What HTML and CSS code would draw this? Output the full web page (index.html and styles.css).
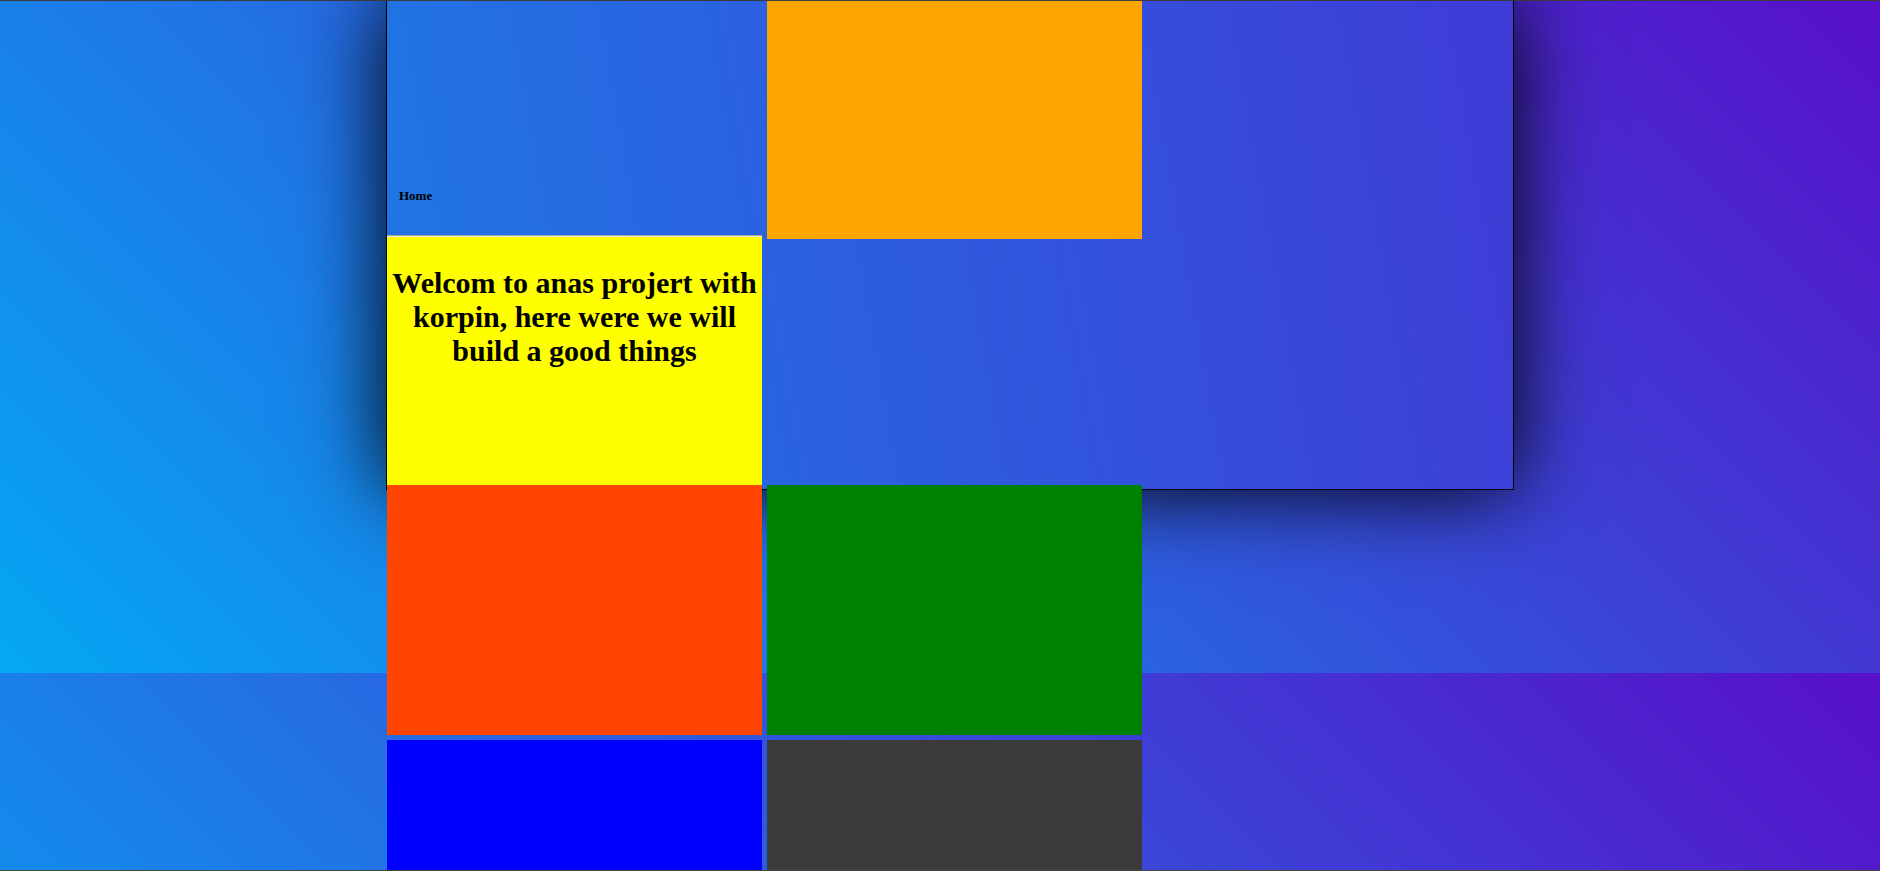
FILE: index.html
```html
<!DOCTYPE html>
<html lang="en">
<head>
<meta charset="utf-8">
<title>anas projert</title>
<link rel="stylesheet" href="styles.css">
</head>
<body>
<div class="stage">
  <header class="frame"></header>
  <main class="tiles">
    <div class="col">
      <nav class="nav"><a class="nav-link" href="#">Home</a></nav>
      <section class="tile tile-yellow">
        <h1 class="welcome">Welcom to anas projert with korpin, here were we will build a good things</h1>
      </section>
      <div class="tile tile-red"></div>
      <div class="tile tile-blue"></div>
    </div>
    <div class="col">
      <div class="tile tile-orange"></div>
      <div class="spacer"></div>
      <div class="tile tile-green"></div>
      <div class="tile tile-dark"></div>
    </div>
  </main>
</div>
</body>
</html>
```
FILE: styles.css
```css
html {
  overflow: hidden;
  background: linear-gradient(45deg, #04a8f4, #580fc8);
  background-size: 100% 673px;
  background-repeat: repeat;
}

body {
  margin: 0;
  padding-left: 20px;
  font-family: "Liberation Serif", "Times New Roman", serif;
  color: #000;
}

body::before,
body::after {
  content: "";
  position: fixed;
  left: 0;
  right: 0;
  height: 1px;
  background: #3a3a3a;
  z-index: 10;
}
body::before { top: 0; }
body::after { bottom: 0; background: #4a4a40; }

.stage {
  width: 1128px;
  margin: 0 auto;
  display: grid;
}

.frame {
  grid-area: 1 / 1;
  align-self: start;
  margin-top: -1px;
  height: 489px;
  border: 1px solid #000;
  background: linear-gradient(80deg, #1f77e5, #3f3bd6);
  box-shadow: 0 0 80px #000;
}

.tiles {
  grid-area: 1 / 1;
  align-self: start;
  margin-left: 1px;
  display: flex;
  gap: 5px;
  position: relative;
}

.col {
  width: 375px;
  display: flex;
  flex-direction: column;
}

.nav {
  height: 235px;
  box-sizing: border-box;
  display: flex;
  align-items: flex-end;
  padding: 0 0 31px 12px;
}

.nav-link {
  font-weight: bold;
  font-size: 13px;
  color: #000;
  text-decoration: none;
}

.tile {
  height: 250px;
  flex: none;
  box-sizing: border-box;
}

.tile-yellow {
  background: #ffff00;
  border-top: 1px solid #a8a890;
  box-shadow: inset 0 1px 0 #ecece0;
  padding-top: 1px;
  overflow: hidden;
}

.welcome {
  margin: 29px 4px 0;
  font-size: 30px;
  font-weight: bold;
  text-align: center;
  line-height: 34px;
}

.tile-red { background: #ff4500; }
.tile-blue { background: #0000ff; margin-top: 5px; }

.tile-orange { background: #ffa500; height: 239px; }
.spacer { height: 246px; flex: none; }
.tile-green { background: #008000; }
.tile-dark { background: #3b3b3b; margin-top: 5px; }
```
